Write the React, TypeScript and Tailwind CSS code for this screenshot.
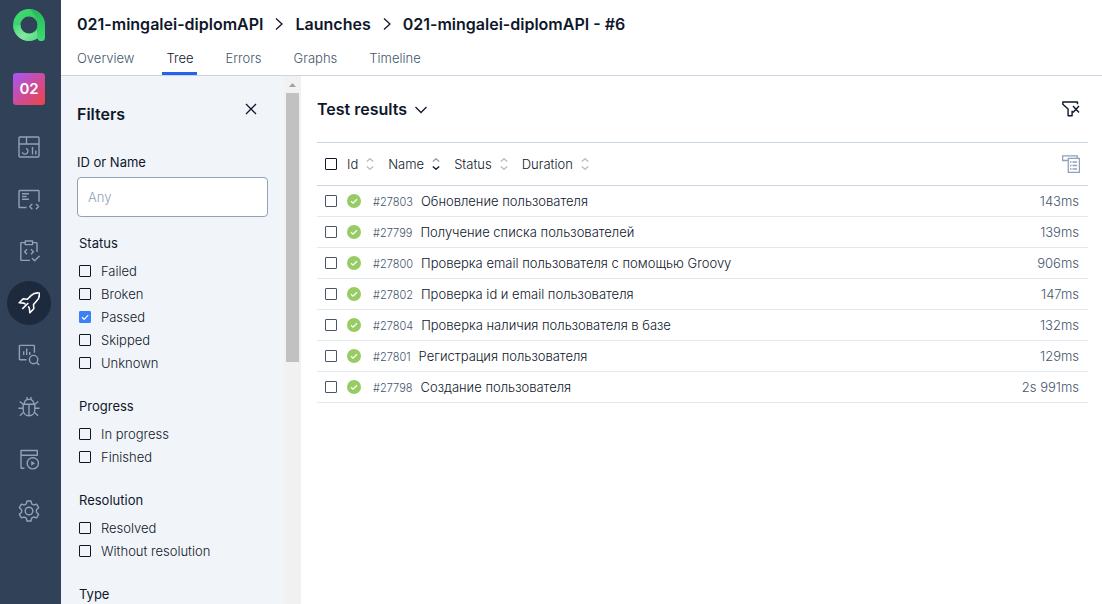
import { useState } from 'react';
import type { ReactNode } from 'react';
import clsx from 'clsx';

type NavEntry = { label: string; active?: boolean; drawing: ReactNode };

const navEntries: NavEntry[] = [
  {
    label: 'Dashboards',
    drawing: (
      <>
        <rect x="1" y="1" width="20" height="20" rx="1" />
        <path d="M1 8h20M8.5 1v7M8 12.3a3 3 0 1 1-3.8 4M14.5 11v7.5M17.8 14.5v4" />
      </>
    ),
  },
  {
    label: 'Test cases',
    drawing: (
      <>
        <path d="M8.5 19.5H1.6a.6.6 0 0 1-.6-.6V3.1a.6.6 0 0 1 .6-.6h18.8a.6.6 0 0 1 .6.6v10.6" />
        <path d="M4 5.7h7M4 8.5h4.7M4 11.3h7M14.3 16l-2.6 2.6 2.6 2.6M18 16l2.6 2.6-2.6 2.6" />
      </>
    ),
  },
  {
    label: 'Test plans',
    drawing: (
      <>
        <path d="M7 2.6H3.4a.6.6 0 0 0-.6.6v16.6c0 .3.3.6.6.6H12M14.8 2.6h3.6c.3 0 .6.3.6.6V12" />
        <path d="M7.2 1h7.4v3.6H7.2zM9 9.2l-2.4 2.5L9 14.2M13 9.2l2.4 2.5-2.4 2.5M14 18.2l2.6 2.5 5-4.8" />
      </>
    ),
  },
  {
    label: 'Launches',
    active: true,
    drawing: (
      <>
        <path d="M20.6.9c-3-.2-5.3.5-7.3 2.5L9.4 7.2l-4.2-.4L1.2 10.7l4.4.4c.9.1 1.6.7 1.8 1.5" />
        <path d="M20.6.9c.6 0 .8.3.8.8.1 2.9-.7 5.2-2.6 7.1L15.5 12.5l.3 4.3-3.9 4-.5-4.5c-.1-.9-.6-1.5-1.4-1.8M4.3 16.9l6-5.9" />
      </>
    ),
  },
  {
    label: 'Analytics',
    drawing: (
      <>
        <path d="M8.5 15.8H2a.6.6 0 0 1-.6-.6V2c0-.3.3-.6.6-.6h13.8c.3 0 .6.3.6.6v6.8" />
        <path d="M5.7 7.3v3.6M8.7 4.4v6.5M11.7 8v2.9M18.6 18.6l2.7 2.5" />
        <circle cx="15.6" cy="15.6" r="4.2" />
      </>
    ),
  },
  {
    label: 'Defects',
    drawing: (
      <>
        <path d="M5.2 8.3h11.6v5.4c0 3.4-2.4 6-5.8 6s-5.8-2.6-5.8-6zM6.2 8.3c0-2.9 2-4.9 4.8-4.9s4.8 2 4.8 4.9M11 8.3v11.4" />
        <path d="M9 3.5V1M13 3.5V1M5.2 8.3 1.7 5.5M16.8 8.3l3.5-2.8M5.2 12.3H.4M16.8 12.3h4.8M5.7 16.3l-3.8 3.4M16.3 16.3l3.8 3.4" />
      </>
    ),
  },
  {
    label: 'Jobs',
    drawing: (
      <>
        <path d="M3 2.5h16.3v4.7H3zM3 7.2v12.5c0 .3.3.6.6.6h2.8" />
        <circle cx="14.8" cy="15.3" r="5.6" />
        <path d="M13.4 13.2v4.2l3.4-2.1z" fill="currentColor" strokeWidth=".4" />
      </>
    ),
  },
  {
    label: 'Settings',
    drawing: (
      <>
        <path d="M9 1h4l.7 2.900 2 1.100 2.900-.8 2 3.500-2.200 2.100v2.400l2.200 2.100-2 3.500-2.900-.8-2 1.100L13 21H9l-.7-2.900-2-1.100-2.900.8-2-3.500 2.200-2.100V9.800L1.400 7.700l2-3.500 2.900.8 2-1.100z" />
        <circle cx="11" cy="11" r="3.8" />
      </>
    ),
  },
];

const tabs = ['Overview', 'Tree', 'Errors', 'Graphs', 'Timeline'];

const filterGroups: { title: string; options: string[] }[] = [
  { title: 'Status', options: ['Failed', 'Broken', 'Passed', 'Skipped', 'Unknown'] },
  { title: 'Progress', options: ['In progress', 'Finished'] },
  { title: 'Resolution', options: ['Resolved', 'Without resolution'] },
  { title: 'Type', options: [] },
];

const sortColumns = ['Id', 'Name', 'Status', 'Duration'];

const results = [
  { id: 27803, name: 'Обновление пользователя', duration: '143ms' },
  { id: 27799, name: 'Получение списка пользователей', duration: '139ms' },
  { id: 27800, name: 'Проверка email пользователя с помощью Groovy', duration: '906ms' },
  { id: 27802, name: 'Проверка id и email пользователя', duration: '147ms' },
  { id: 27804, name: 'Проверка наличия пользователя в базе', duration: '132ms' },
  { id: 27801, name: 'Регистрация пользователя', duration: '129ms' },
  { id: 27798, name: 'Создание пользователя', duration: '2s 991ms' },
];

function Logo() {
  return (
    <svg viewBox="0 0 32 32" className="size-8" aria-hidden="true">
      <defs>
        <linearGradient id="ring" x1="0" y1="0" x2="1" y2="1">
          <stop offset="0" stopColor="#3fd873" />
          <stop offset=".5" stopColor="#35cf69" />
          <stop offset="1" stopColor="#22b455" />
        </linearGradient>
        <linearGradient id="sweep" x1="0" y1="0" x2="1" y2=".6">
          <stop offset="0" stopColor="#3fd873" />
          <stop offset=".6" stopColor="#86e8a2" />
          <stop offset="1" stopColor="#5fdc86" />
        </linearGradient>
        <linearGradient id="stem" x1="0" y1="0" x2="0" y2="1">
          <stop offset="0" stopColor="#25b957" />
          <stop offset="1" stopColor="#3fdb75" />
        </linearGradient>
      </defs>
      <circle cx="16" cy="16" r="12.2" fill="none" stroke="url(#ring)" strokeWidth="7.4" />
      <path d="M.2 16C.2 24.7 7.3 32 16 32c3.6 0 6.7-1.2 9.4-3.2l-1.6-7.8c-1.8 2.4-4.6 3.7-7.8 3.7-4.8 0-8.6-3.9-8.6-8.7z" fill="url(#sweep)" />
      <path d="M24.5 16c0-5-2.3-10.3-7.7-15.8C25.3.2 32 7.3 32 15.8V28.4a3.7 3.7 0 0 1-7.5 0z" fill="url(#stem)" />
    </svg>
  );
}

function Checkbox({ label, checked, onChange, muted }: { label?: string; checked: boolean; onChange: () => void; muted?: boolean }) {
  return (
    <span className="grid size-3 shrink-0 place-items-center">
      <input
        type="checkbox"
        aria-label={label}
        checked={checked}
        onChange={onChange}
        className={clsx(
          'col-start-1 row-start-1 size-3 appearance-none rounded-[1px] border checked:border-[#3b82f6] checked:bg-[#3b82f6]',
          muted ? 'border-slate-600' : 'border-slate-900',
        )}
      />
      {checked && (
        <svg viewBox="0 0 12 12" className="pointer-events-none col-start-1 row-start-1 size-3 fill-none stroke-white" aria-hidden="true">
          <path d="M3 6.2 5.2 8.3 9.2 4.2" strokeWidth="1.2" />
        </svg>
      )}
    </span>
  );
}

function SortArrows({ active }: { active: boolean }) {
  return (
    <svg viewBox="0 0 8 12" className="h-3 w-2 fill-none" strokeWidth="1.3" aria-hidden="true">
      <path d="m.8 3.6 3.2-2.9 3.2 2.9" className={active ? 'stroke-slate-400' : 'stroke-[#bdbdbd]'} />
      <path d="m.8 8.4 3.2 2.9 3.2-2.9" className={active ? 'stroke-slate-900' : 'stroke-[#bdbdbd]'} />
    </svg>
  );
}

function Separator() {
  return (
    <svg viewBox="0 0 8 12" className="h-3 w-2 fill-none stroke-slate-900" strokeWidth="1.3" aria-hidden="true">
      <path d="m1 .5 6 5.5-6 5.5" />
    </svg>
  );
}

function Sidebar() {
  return (
    <aside className="flex w-[61px] shrink-0 flex-col items-center bg-slate-700 pt-[9px] pr-[3px]">
      <a href="#home" aria-label="Home">
        <Logo />
      </a>
      <a
        href="#project"
        className="mt-8 flex size-8 items-center justify-center rounded-[3px] bg-linear-to-br/srgb from-[#a855f7] to-[#ef4444] text-[15px] font-semibold text-white"
      >
        02
      </a>
      <nav className="mt-5 flex flex-col gap-2">
        {navEntries.map((entry) => (
          <a
            key={entry.label}
            href={`#${entry.label}`}
            aria-label={entry.label}
            className={clsx(
              'flex size-11 items-center justify-center rounded-full',
              entry.active ? 'bg-slate-800 text-white' : 'text-slate-400',
            )}
          >
            <svg
              viewBox="0 0 22 22"
              className="size-[22px] fill-none stroke-current"
              strokeWidth={entry.active ? 1.6 : 1.4}
              strokeLinejoin="round"
              aria-hidden="true"
            >
              {entry.drawing}
            </svg>
          </a>
        ))}
      </nav>
    </aside>
  );
}

function Header() {
  return (
    <header className="flex h-[76px] shrink-0 flex-col justify-between border-b border-slate-300 pt-3 pl-4">
      <nav aria-label="Breadcrumb" className="flex items-center gap-3 text-[16px] leading-6 font-semibold text-slate-900">
        <a href="#project">021-mingalei-diplomAPI</a>
        <Separator />
        <a href="#launches">Launches</a>
        <Separator />
        <h1>021-mingalei-diplomAPI - #6</h1>
      </nav>
      <nav aria-label="Launch sections" className="-ml-1 flex gap-6 text-[13px] leading-5 font-light">
        {tabs.map((tab) => (
          <a
            key={tab}
            href={`#${tab}`}
            className={clsx(
              'border-b-3 px-1 pb-1',
              tab === 'Tree' ? 'border-[#2563eb] text-slate-900' : 'border-transparent text-slate-600',
            )}
          >
            {tab}
          </a>
        ))}
      </nav>
    </header>
  );
}

function Filters() {
  const [selected, setSelected] = useState<string[]>(['Passed']);
  const toggle = (option: string) =>
    setSelected((list) => (list.includes(option) ? list.filter((item) => item !== option) : [...list, option]));

  return (
    <section aria-label="Filters" className="flex w-60 shrink-0 bg-slate-100">
      <div className="min-w-0 flex-1 overflow-hidden px-4 pt-6">
        <div className="flex items-start justify-between pr-[11px]">
          <h2 className="pt-0.5 text-[16px] leading-6 font-semibold text-slate-900">Filters</h2>
          <button type="button" aria-label="Close filters" className="pt-[3px]">
            <svg viewBox="0 0 12 12" className="size-3 stroke-slate-900" strokeWidth="1.3" aria-hidden="true">
              <path d="m1 1 10 10M11 1 1 11" />
            </svg>
          </button>
        </div>
        <label htmlFor="query" className="mt-[26px] block text-[13px] leading-5 text-slate-900">
          ID or Name
        </label>
        <input
          id="query"
          type="text"
          placeholder="Any"
          className="mt-[5px] block h-10 w-full rounded-[4px] border border-slate-400 bg-white px-2.5 text-[13px] font-light text-slate-900 placeholder:text-slate-400"
        />
        <div className="mt-4 flex flex-col gap-[22px] pl-0.5">
          {filterGroups.map((group) => (
            <fieldset key={group.title}>
              <legend className="text-[13px] leading-5 text-slate-900">{group.title}</legend>
              <div className="flex flex-col pt-1.5">
                {group.options.map((option) => (
                  <label key={option} className="flex h-[23px] items-center gap-2.5 text-[13px] leading-5 font-light text-slate-900">
                    <Checkbox checked={selected.includes(option)} onChange={() => toggle(option)} />
                    {option}
                  </label>
                ))}
              </div>
            </fieldset>
          ))}
        </div>
      </div>
      <div className="flex w-[17px] shrink-0 flex-col items-center bg-[#f1f1f1]" aria-hidden="true">
        <svg viewBox="0 0 17 17" className="size-[17px] fill-[#a3a3a3]">
          <path d="M5 11 8.5 7 12 11z" />
        </svg>
        <div className="h-[51%] w-[13px] bg-[#c1c1c1]" />
      </div>
    </section>
  );
}

function Results() {
  const [checked, setChecked] = useState<number[]>([]);
  const allChecked = checked.length === results.length;

  return (
    <main className="min-w-0 flex-1 pt-[21px] pr-3.5 pl-4">
      <div className="flex items-center justify-between pr-2">
        <h2>
          <button type="button" className="flex items-center gap-2 text-[16px] leading-6 font-semibold text-slate-900">
            Test results
            <svg viewBox="0 0 12 8" className="mt-0.5 h-2 w-3 fill-none stroke-slate-900" strokeWidth="1.3" aria-hidden="true">
              <path d="m.5 1 5.5 5.5L11.5 1" />
            </svg>
          </button>
        </h2>
        <button type="button" aria-label="Clear filters">
          <svg viewBox="0 0 18 16" className="h-4 w-[18px] fill-none stroke-slate-900" strokeWidth="1.4" strokeLinejoin="round" aria-hidden="true">
            <path d="M15.5 3.2V1H.8v2.3l5.3 4.8v6.7h4V9.8M11 5l6 6.500M17 5l-6 6.500" />
          </svg>
        </button>
      </div>
      <table className="mt-[21px] w-full border-collapse border-t border-slate-300 text-[13px] leading-5 font-light text-slate-900">
        <thead>
          <tr className="h-[43px] border-b border-slate-300">
            <th className="w-[30px] pl-2">
              <Checkbox label="Select all" checked={allChecked} onChange={() => setChecked(allChecked ? [] : results.map((r) => r.id))} />
            </th>
            <th colSpan={2} className="font-light">
              <div className="flex gap-3.5">
                {sortColumns.map((column) => (
                  <button key={column} type="button" className="flex items-center gap-2">
                    {column}
                    <SortArrows active={column === 'Name'} />
                  </button>
                ))}
              </div>
            </th>
            <th className="pr-2">
              <button type="button" aria-label="Choose columns" className="ml-auto block">
                <svg viewBox="0 0 18 18" className="size-[18px] fill-none stroke-slate-400" strokeWidth="1.3" aria-hidden="true">
                  <path d="M6 5.5H.6V.8h14.6v2.4M6.3 3.3h11.1v14.1H6.3z" />
                  <path d="M8 7h1.5M10.5 7H15M8 10.5h1.5M10.5 10.5H15M8 14h1.5M10.5 14H15" />
                </svg>
              </button>
            </th>
          </tr>
        </thead>
        <tbody>
          {results.map((result) => (
            <tr key={result.id} className="h-[31px] border-b border-slate-200">
              <td className="w-[30px] pl-2">
                <Checkbox
                  muted
                  label={`Select ${result.name}`}
                  checked={checked.includes(result.id)}
                  onChange={() =>
                    setChecked((list) => (list.includes(result.id) ? list.filter((id) => id !== result.id) : [...list, result.id]))
                  }
                />
              </td>
              <td className="w-[26px]">
                <svg viewBox="0 0 14 14" className="size-3.5 fill-none" role="img" aria-label="Passed">
                  <circle cx="7" cy="7" r="7" fill="#97cc64" />
                  <path d="m4 7.300 2 1.900 4-4" stroke="#fff" strokeWidth="1.3" />
                </svg>
              </td>
              <td>
                <a href={`#${result.id}`} className="flex items-baseline gap-2">
                  <span className="text-[11px] text-slate-600">#{result.id}</span>
                  {result.name}
                </a>
              </td>
              <td className="pr-[9px] text-right text-slate-600">{result.duration}</td>
            </tr>
          ))}
        </tbody>
      </table>
    </main>
  );
}

export default function App() {
  return (
    <div className="flex h-screen overflow-hidden bg-white font-['Inter','Noto_Sans',sans-serif]">
      <Sidebar />
      <div className="flex min-w-0 flex-1 flex-col">
        <Header />
        <div className="flex min-h-0 flex-1">
          <Filters />
          <Results />
        </div>
      </div>
    </div>
  );
}
